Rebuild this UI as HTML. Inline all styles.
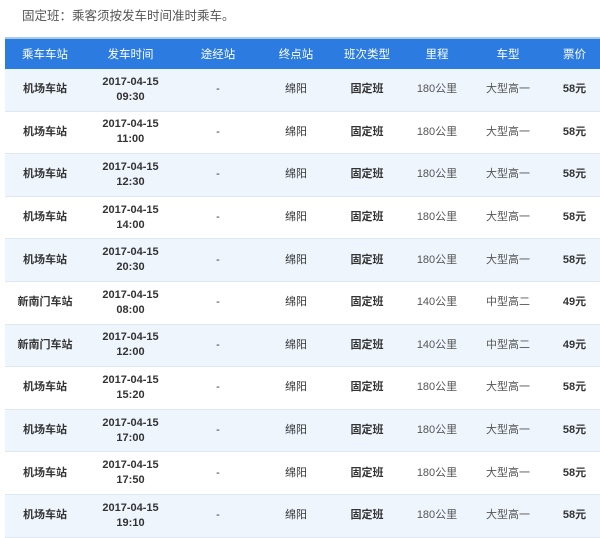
<!DOCTYPE html>
<html><head><meta charset="utf-8"><style>
body{margin:0;width:600px;height:538px;overflow:hidden;background:#fff;font-family:"Liberation Sans","Noto Sans CJK SC",sans-serif;}
.note{position:absolute;left:22px;top:5px;font-size:12.5px;color:#555;}
table{position:absolute;left:5px;top:37px;border-collapse:collapse;width:600px;table-layout:fixed;border-top:2px solid #a9c9e8;}
th{background:#2b7be0;color:#fff;font-weight:normal;font-size:11.5px;height:30px;text-align:center;padding:0;}
td{height:41.6px;font-size:11px;color:#333;text-align:center;padding:0;border-bottom:1px solid #dfe8f2;line-height:15px;}
tr:nth-child(odd) td{background:#eef5fd;}
.b{font-weight:bold;color:#333;}
.g{color:#555;}
</style></head><body>
<div class="note">固定班：乘客须按发车时间准时乘车。</div>
<table>
<colgroup><col style="width:80px"><col style="width:91px"><col style="width:84px"><col style="width:72px"><col style="width:70px"><col style="width:70px"><col style="width:72px"><col style="width:61px"></colgroup>
<thead><tr><th>乘车车站</th><th>发车时间</th><th>途经站</th><th>终点站</th><th>班次类型</th><th>里程</th><th>车型</th><th>票价</th></tr></thead>
<tbody>
<tr><td class="b">机场车站</td><td class="b">2017-04-15<br>09:30</td><td>-</td><td>绵阳</td><td class="b">固定班</td><td class="g">180公里</td><td class="g">大型高一</td><td class="b">58元</td></tr>
<tr><td class="b">机场车站</td><td class="b">2017-04-15<br>11:00</td><td>-</td><td>绵阳</td><td class="b">固定班</td><td class="g">180公里</td><td class="g">大型高一</td><td class="b">58元</td></tr>
<tr><td class="b">机场车站</td><td class="b">2017-04-15<br>12:30</td><td>-</td><td>绵阳</td><td class="b">固定班</td><td class="g">180公里</td><td class="g">大型高一</td><td class="b">58元</td></tr>
<tr><td class="b">机场车站</td><td class="b">2017-04-15<br>14:00</td><td>-</td><td>绵阳</td><td class="b">固定班</td><td class="g">180公里</td><td class="g">大型高一</td><td class="b">58元</td></tr>
<tr><td class="b">机场车站</td><td class="b">2017-04-15<br>20:30</td><td>-</td><td>绵阳</td><td class="b">固定班</td><td class="g">180公里</td><td class="g">大型高一</td><td class="b">58元</td></tr>
<tr><td class="b">新南门车站</td><td class="b">2017-04-15<br>08:00</td><td>-</td><td>绵阳</td><td class="b">固定班</td><td class="g">140公里</td><td class="g">中型高二</td><td class="b">49元</td></tr>
<tr><td class="b">新南门车站</td><td class="b">2017-04-15<br>12:00</td><td>-</td><td>绵阳</td><td class="b">固定班</td><td class="g">140公里</td><td class="g">中型高二</td><td class="b">49元</td></tr>
<tr><td class="b">机场车站</td><td class="b">2017-04-15<br>15:20</td><td>-</td><td>绵阳</td><td class="b">固定班</td><td class="g">180公里</td><td class="g">大型高一</td><td class="b">58元</td></tr>
<tr><td class="b">机场车站</td><td class="b">2017-04-15<br>17:00</td><td>-</td><td>绵阳</td><td class="b">固定班</td><td class="g">180公里</td><td class="g">大型高一</td><td class="b">58元</td></tr>
<tr><td class="b">机场车站</td><td class="b">2017-04-15<br>17:50</td><td>-</td><td>绵阳</td><td class="b">固定班</td><td class="g">180公里</td><td class="g">大型高一</td><td class="b">58元</td></tr>
<tr><td class="b">机场车站</td><td class="b">2017-04-15<br>19:10</td><td>-</td><td>绵阳</td><td class="b">固定班</td><td class="g">180公里</td><td class="g">大型高一</td><td class="b">58元</td></tr>
</tbody></table>
</body></html>
